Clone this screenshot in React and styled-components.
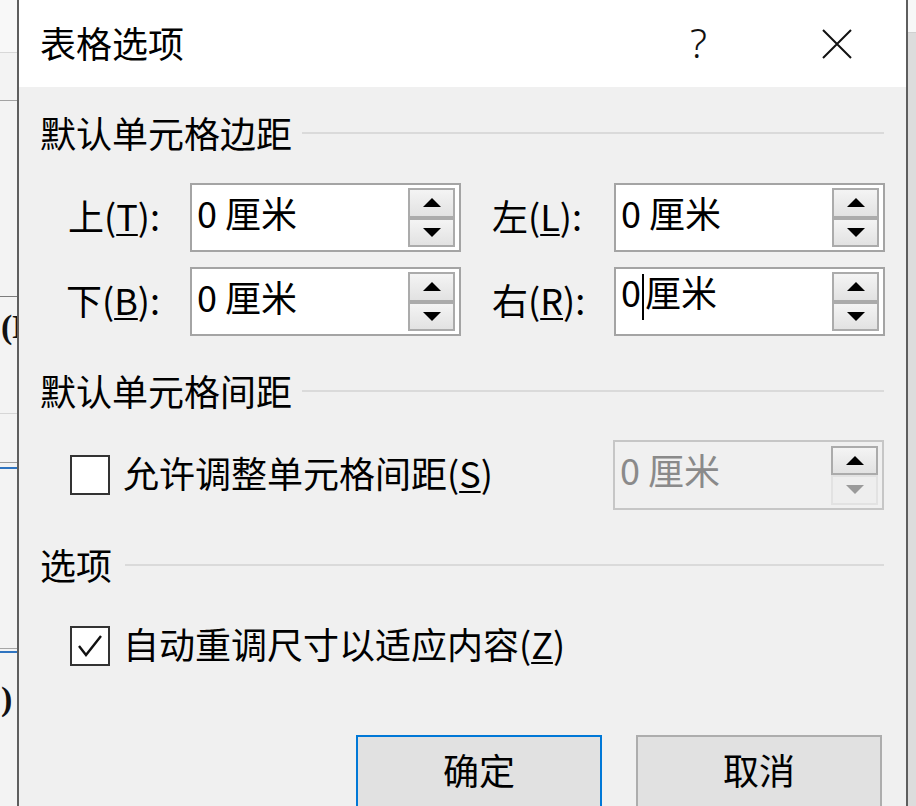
import React from "react";
import styled, { createGlobalStyle } from "styled-components";

const Global = createGlobalStyle`
  html, body { margin: 0; padding: 0; background: #fff; }
  body {
    width: 916px; height: 806px; overflow: hidden;
    font-family: "Noto Sans CJK SC", "Noto Sans", sans-serif;
    color: #000;
  }
`;

const Page = styled.div`
  display: flex;
  height: 806px;
  overflow: hidden;
`;

/* ---------- document behind the dialog ---------- */
const DocStrip = styled.div`
  flex: none;
  width: 17px;
  display: flex;
  flex-direction: column;
  background: #f3f3f3;
  overflow: hidden;
`;

const DocRow = styled.div`
  flex: ${(p) => (p.$h ? "none" : "1")};
  height: ${(p) => (p.$h ? `${p.$h}px` : "auto")};
  box-sizing: border-box;
  border-bottom: ${(p) => (p.$c ? `${p.$w || 1}px solid ${p.$c}` : "none")};
  background: ${(p) => p.$bg || "transparent"};
  white-space: nowrap;
  overflow: hidden;
`;

const DocText = styled.div`
  font-family: "Liberation Serif", serif;
  font-weight: 700;
  font-size: 34px;
  line-height: 40px;
  padding-top: ${(p) => p.$pt}px;
  padding-left: 1px;
  color: #111;
`;

const SideStrip = styled.div`
  flex: none;
  width: 8px;
  display: flex;
  flex-direction: column;
  background: #dcdcdc;
`;

/* ---------- dialog ---------- */
const Dialog = styled.div`
  flex: none;
  width: 891px;
  box-sizing: border-box;
  border-left: 2px solid #5e5e5e;
  border-right: 2px solid #5e5e5e;
  background: #f0f0f0;
  display: flex;
  flex-direction: column;
`;

const TitleBar = styled.div`
  height: 87px;
  flex: none;
  background: #fff;
  display: flex;
  align-items: center;
  padding: 0 54px 0 21px;
`;

const Title = styled.div`
  font-size: 36px;
  line-height: 40px;
  padding-bottom: 4px;
  flex: 1;
`;

const Help = styled.div`
  font-family: "Noto Sans", sans-serif;
  font-weight: 300;
  font-size: 40px;
  line-height: 44px;
  padding-bottom: 2px;
  margin-right: 115px;
  color: #111;
`;

const CloseIcon = styled.svg`
  width: 30px;
  height: 30px;
  display: block;
`;

const Body = styled.div`
  flex: 1;
  padding: 26px 22px 0 21px;
  display: flex;
  flex-direction: column;
`;

const SectionHeader = styled.div`
  margin-top: ${(p) => p.$mt || 0}px;
  display: flex;
  align-items: center;
  font-size: 36px;
  line-height: 38px;
  padding-bottom: 6px;
  white-space: nowrap;
  &::after {
    content: "";
    flex: 1;
    height: 2px;
    margin-left: ${(p) => p.$gap || 10}px;
    margin-top: 2px;
    background: #dadada;
  }
`;

const MarginGrid = styled.div`
  margin: 26px 0 0 20px;
  display: flex;
  flex-direction: column;
  gap: 15px;
`;

const MarginRow = styled.div`
  display: flex;
  gap: 31px;
`;

const Field = styled.div`
  display: flex;
  align-items: center;
  gap: 30px;
`;

const FieldLabel = styled.div`
  width: ${(p) => p.$w}px;
  text-align: ${(p) => p.$align};
  font-size: 36px;
  line-height: 38px;
  padding-bottom: 6px;
  white-space: nowrap;
`;

const U = styled.span`
  text-decoration: underline;
  text-decoration-thickness: 2px;
  text-underline-offset: 3px;
`;

const SpinBox = styled.div`
  width: 271px;
  height: ${(p) => p.$h || 69}px;
  box-sizing: border-box;
  border: 2px solid ${(p) => (p.$disabled ? "#c6c6c6" : "#a4a4a4")};
  background: ${(p) => (p.$disabled ? "#f0f0f0" : "#fff")};
  display: flex;
  align-items: center;
  padding: 0 4px 0 5px;
  margin-left: ${(p) => (p.$push ? "auto" : "0")};
`;

const SpinValue = styled.div`
  flex: 1;
  font-size: 36px;
  line-height: 40px;
  padding-bottom: 12px;
  color: ${(p) => (p.$disabled ? "#8a8a8a" : "#000")};
  white-space: nowrap;
`;

const Caret = styled.span`
  display: inline-block;
  width: 2px;
  height: 46px;
  background: #000;
  vertical-align: middle;
  margin: 0 1px 0 1px;
`;

const Spinner = styled.div`
  width: 47px;
  height: 59px;
  display: flex;
  flex-direction: column;
`;

const SpinBtn = styled.div`
  flex: 1;
  box-sizing: border-box;
  border: 2px solid ${(p) => (p.$faint ? "#e2e2e2" : "#ababab")};
  background: ${(p) =>
    p.$faint ? "#eeeeee" : "linear-gradient(#f4f4f4, #e2e2e2)"};
  display: flex;
  align-items: center;
  justify-content: center;
`;

const Arrow = styled.div`
  width: 0;
  height: 0;
  border-left: 9px solid transparent;
  border-right: 9px solid transparent;
  ${(p) =>
    p.$dir === "up"
      ? `border-bottom: 9px solid ${p.$color || "#000"};`
      : `border-top: 9px solid ${p.$color || "#000"};`}
`;

const CheckRow = styled.div`
  margin-top: ${(p) => p.$mt}px;
  height: ${(p) => p.$h}px;
  display: flex;
  align-items: center;
`;

const CheckBox = styled.div`
  width: 40px;
  height: 40px;
  box-sizing: border-box;
  margin-left: 30px;
  border: 2px solid #333;
  background: #fff;
  display: flex;
  align-items: center;
  justify-content: center;
  flex: none;
`;

const CheckLabel = styled.div`
  margin-left: 13px;
  font-size: 36px;
  line-height: 38px;
  padding-bottom: 6px;
  white-space: nowrap;
`;

const ButtonRow = styled.div`
  margin-top: 67px;
  display: flex;
  justify-content: flex-end;
  gap: 34px;
  padding-right: 2px;
`;

const DialogButton = styled.button`
  width: 246px;
  height: 74px;
  box-sizing: border-box;
  padding: 0 0 6px 0;
  border: 2px solid ${(p) => (p.$primary ? "#0078d7" : "#adadad")};
  background: #e1e1e1;
  font-family: inherit;
  font-size: 36px;
  line-height: 40px;
  color: #000;
  display: flex;
  align-items: center;
  justify-content: center;
`;

function Spin({ value, disabled, push, caret, h }) {
  return (
    <SpinBox $disabled={disabled} $push={push} $h={h}>
      <SpinValue $disabled={disabled}>
        {caret ? (
          <>
            0<Caret />厘米
          </>
        ) : (
          value
        )}
      </SpinValue>
      <Spinner>
        <SpinBtn>
          <Arrow $dir="up" />
        </SpinBtn>
        <SpinBtn $faint={disabled}>
          <Arrow $dir="down" $color={disabled ? "#9a9a9a" : "#000"} />
        </SpinBtn>
      </Spinner>
    </SpinBox>
  );
}

function Label({ text, mn, w, align }) {
  return (
    <FieldLabel $w={w} $align={align}>
      {text}(<U>{mn}</U>):
    </FieldLabel>
  );
}

export default function App() {
  return (
    <>
      <Global />
      <Page>
        <DocStrip>
          <DocRow $h={53} $c="#d8d8d8" $bg="#f8f8f8" />
          <DocRow $h={48} $c="#a2a2a2" />
          <DocRow $h={196} $c="#7c7c7c" />
          <DocRow $h={117} $c="#d6d6d6">
            <DocText $pt={10}>(L</DocText>
          </DocRow>
          <DocRow $h={49} $c="#9c9c9c" />
          <DocRow $h={6} $c="#2f74c0" $w={2} />
          <DocRow $h={180} $c="#a6a6a6" />
          <DocRow $h={4} $c="#2f74c0" $w={2} />
          <DocRow>
            <DocText $pt={26}>)</DocText>
          </DocRow>
        </DocStrip>

        <Dialog>
          <TitleBar>
            <Title>表格选项</Title>
            <Help>?</Help>
            <CloseIcon viewBox="0 0 30 30">
              <path d="M1 1 L29 29 M29 1 L1 29" stroke="#111" strokeWidth="2" fill="none" />
            </CloseIcon>
          </TitleBar>

          <Body>
            <SectionHeader>默认单元格边距</SectionHeader>
            <MarginGrid>
              <MarginRow>
                <Field>
                  <Label text="上" mn="T" w={100} align="right" />
                  <Spin value="0 厘米" />
                </Field>
                <Field>
                  <Label text="左" mn="L" w={92} align="left" />
                  <Spin value="0 厘米" />
                </Field>
              </MarginRow>
              <MarginRow>
                <Field>
                  <Label text="下" mn="B" w={100} align="right" />
                  <Spin value="0 厘米" />
                </Field>
                <Field>
                  <Label text="右" mn="R" w={92} align="left" />
                  <Spin caret />
                </Field>
              </MarginRow>
            </MarginGrid>

            <SectionHeader $mt={35}>默认单元格间距</SectionHeader>
            <CheckRow $mt={25} $h={70}>
              <CheckBox />
              <CheckLabel>
                允许调整单元格间距(<U>S</U>)
              </CheckLabel>
              <Spin value="0 厘米" disabled push h={70} />
            </CheckRow>

            <SectionHeader $mt={35} $gap={13}>选项</SectionHeader>
            <CheckRow $mt={35} $h={44}>
              <CheckBox>
                <svg width="28" height="28" viewBox="0 0 28 28">
                  <polyline points="3,14 10,23 25,4" fill="none" stroke="#111" strokeWidth="2.4" />
                </svg>
              </CheckBox>
              <CheckLabel>
                自动重调尺寸以适应内容(<U>Z</U>)
              </CheckLabel>
            </CheckRow>

            <ButtonRow>
              <DialogButton $primary>确定</DialogButton>
              <DialogButton>取消</DialogButton>
            </ButtonRow>
          </Body>
        </Dialog>

        <SideStrip>
          <DocRow $h={33} $bg="#f7f7f7" $c="#d0d0d0" />
          <DocRow />
        </SideStrip>
      </Page>
    </>
  );
}
